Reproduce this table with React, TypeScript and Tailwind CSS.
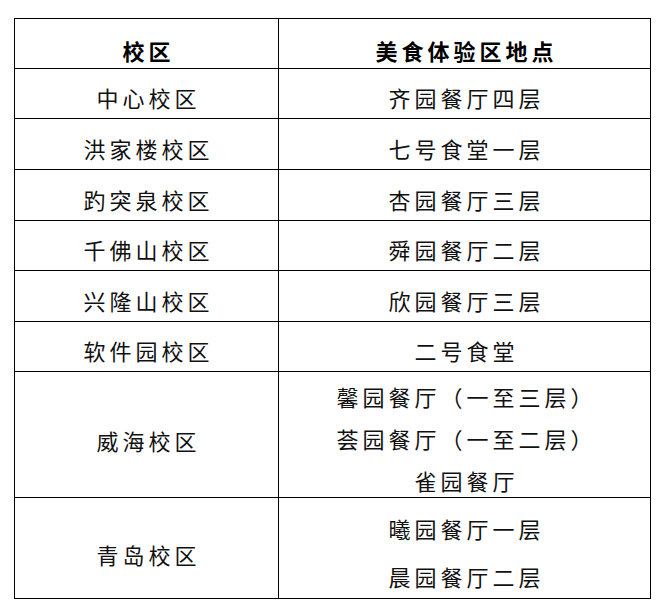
const rows: { campus: string; places: string[]; h: string; gap?: string }[] = [
  { campus: "中心校区", places: ["齐园餐厅四层"], h: "h-[50px]" },
  { campus: "洪家楼校区", places: ["七号食堂一层"], h: "h-[51px]" },
  { campus: "趵突泉校区", places: ["杏园餐厅三层"], h: "h-[51px]" },
  { campus: "千佛山校区", places: ["舜园餐厅二层"], h: "h-[50px]" },
  { campus: "兴隆山校区", places: ["欣园餐厅三层"], h: "h-[51px]" },
  { campus: "软件园校区", places: ["二号食堂"], h: "h-[50px]" },
  {
    campus: "威海校区",
    places: ["馨园餐厅（一至三层）", "荟园餐厅（一至二层）", "雀园餐厅"],
    h: "h-[126px]",
    gap: "gap-[14px]",
  },
  {
    campus: "青岛校区",
    places: ["曦园餐厅一层", "晨园餐厅二层"],
    h: "h-[101px]",
    gap: "gap-[20px]",
  },
];

const cell = "flex items-center justify-center border-r border-b border-black";

export default function App() {
  return (
    <div
      className="min-h-screen bg-white pt-[18px] pl-[14px] text-[22px] leading-[28px] tracking-[4px] text-[#111]"
      style={{ fontFamily: '"Noto Sans CJK SC", "Noto Sans", sans-serif' }}
    >
      <div className="w-[637px] border-t border-l border-black">
        <div className="flex h-[50px] font-bold text-black">
          <div className={`${cell} w-[264px] pt-[12px] pl-[4px]`}>校区</div>
          <div className={`${cell} flex-1 pt-[12px] pl-[4px]`}>美食体验区地点</div>
        </div>
        {rows.map((r) => (
          <div key={r.campus} className={`flex ${r.h}`}>
            <div
              className={`${cell} w-[264px] pl-[4px] ${
                r.places.length > 1 ? "pt-[11px]" : "pt-[7px]"
              }`}
            >
              {r.campus}
            </div>
            <div className={`${cell} flex-1 flex-col pl-[4px] pt-[7px] ${r.gap ?? ""}`}>
              {r.places.map((p) => (
                <div key={p}>{p}</div>
              ))}
            </div>
          </div>
        ))}
      </div>
    </div>
  );
}
